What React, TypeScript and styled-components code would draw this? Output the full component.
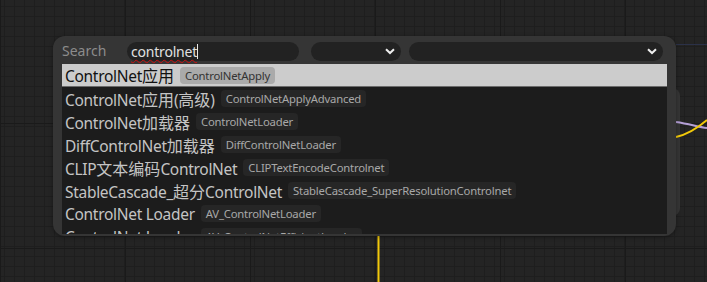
import React from "react";
import styled, { createGlobalStyle } from "styled-components";

const Global = createGlobalStyle`
  html, body { margin: 0; padding: 0; background: #222; }
  body { font-family: "Noto Sans", "Noto Sans CJK SC", sans-serif; }
`;

const Canvas = styled.div`
  position: relative;
  width: 707px;
  height: 282px;
  overflow: hidden;
  background-color: #242424;
  background-image:
    linear-gradient(to right, #1a1a1a 1px, transparent 1px),
    linear-gradient(to bottom, #1a1a1a 1px, transparent 1px),
    linear-gradient(to right, #1e1e1e 1px, transparent 1px),
    linear-gradient(to bottom, #1e1e1e 1px, transparent 1px);
  background-size: 125px 125px, 125px 125px, 10px 10px, 10px 10px;
  background-position: 0 0, 0 -2px, 4px 0, 0 6px;
`;

const Wires = styled.svg`
  position: absolute;
  left: 0;
  top: 0;
  width: 707px;
  height: 282px;
`;

const BackNode = styled.div`
  position: absolute;
  left: 560px;
  top: 88px;
  width: 120px;
  height: 128px;
  background: #353535;
  border-radius: 8px;
`;

const Panel = styled.div`
  position: absolute;
  left: 53px;
  top: 36px;
  width: 623px;
  height: 200px;
  box-sizing: border-box;
  padding: 5px 9px 2px 9px;
  background: #353535;
  border-radius: 12px;
  display: flex;
  flex-direction: column;
  gap: 3px;
  box-shadow: 0 1px 4px rgba(0, 0, 0, 0.35);
`;

const Header = styled.div`
  display: flex;
  align-items: center;
  height: 20px;
`;

const Label = styled.div`
  width: 65px;
  font-size: 14px;
  color: #8c8c8c;
  line-height: 20px;
`;

const SearchBox = styled.div`
  width: 172px;
  height: 19px;
  box-sizing: border-box;
  padding: 0 4px;
  background: #222;
  border-radius: 10px;
  display: flex;
  align-items: center;
  font-size: 14px;
  color: #e0e0e0;
`;

const Typed = styled.span`
  text-decoration: underline wavy #d01010;
  text-decoration-thickness: 1px;
  text-underline-offset: 2px;
  letter-spacing: -0.2px;
`;

const Caret = styled.span`
  display: inline-block;
  width: 1px;
  height: 15px;
  background: #e8e8e8;
`;

const Select = styled.div<{ $w: number; $ml: number }>`
  width: ${(p) => p.$w}px;
  margin-left: ${(p) => p.$ml}px;
  height: 19px;
  box-sizing: border-box;
  padding-right: 6px;
  background: #222;
  border-radius: 10px;
  display: flex;
  align-items: center;
  justify-content: flex-end;
`;

const List = styled.div`
  flex: 1;
  background: #1c1c1c;
  overflow: hidden;
  display: flex;
  flex-direction: column;
`;

const Row = styled.div<{ $sel?: boolean }>`
  flex: none;
  height: 23px;
  box-sizing: border-box;
  padding-left: 3px;
  display: flex;
  align-items: center;
  gap: 6px;
  background: ${(p) => (p.$sel ? "#cccccc" : "transparent")};
  border-bottom: ${(p) => (p.$sel ? "1px solid #6a6a6a" : "none")};
  color: ${(p) => (p.$sel ? "#111" : "#c4c4c4")};
  white-space: nowrap;
`;

const Title = styled.span`
  font-size: 15.5px;
  letter-spacing: -0.3px;
`;

const Cjk = styled.span`
  font-size: 16px;
  letter-spacing: 0;
`;

const Badge = styled.span<{ $sel?: boolean }>`
  font-size: 11.3px;
  line-height: 17px;
  padding: 0 5px;
  border-radius: 4px;
  letter-spacing: -0.2px;
  background: ${(p) => (p.$sel ? "#aaaaaa" : "#262626")};
  color: ${(p) => (p.$sel ? "#333" : "#a8a8a8")};
`;

const Chevron = () => (
  <svg width="10" height="7" viewBox="0 0 10 7">
    <path d="M1 1.2 L5 5 L9 1.2" fill="none" stroke="#eee" strokeWidth="2" />
  </svg>
);

const splitRuns = (s: string) => s.split(/([\u3000-\u9fff\uff00-\uffef]+)/).filter(Boolean);

const isCjk = (s: string) => /[\u3000-\u9fff\uff00-\uffef]/.test(s);

const items: [string, string][] = [
  ["ControlNet应用", "ControlNetApply"],
  ["ControlNet应用(高级)", "ControlNetApplyAdvanced"],
  ["ControlNet加载器", "ControlNetLoader"],
  ["DiffControlNet加载器", "DiffControlNetLoader"],
  ["CLIP文本编码ControlNet", "CLIPTextEncodeControlnet"],
  ["StableCascade_超分ControlNet", "StableCascade_SuperResolutionControlnet"],
  ["ControlNet Loader", "AV_ControlNetLoader"],
  ["ControlNet Loader", "AV_ControlNetEfficientLoader"],
];

export default function App() {
  return (
    <Canvas>
      <Global />
      <BackNode />
      <Wires viewBox="0 0 707 282">
        <line x1="676" y1="44.5" x2="707" y2="44.5" stroke="#2b3148" strokeWidth="1" />
        <path d="M676 122 C 690 124, 698 127, 707 128" fill="none" stroke="#b49fd6" strokeWidth="2" />
        <path d="M676 137 C 690 134, 700 126, 707 120" fill="none" stroke="#f2c90a" strokeWidth="2" />
        <line x1="378.5" y1="230" x2="378.5" y2="282" stroke="#f2c90a" strokeWidth="2" />
      </Wires>
      <Panel>
        <Header>
          <Label>Search</Label>
          <SearchBox>
            <Typed>controlnet</Typed>
            <Caret />
          </SearchBox>
          <Select $w={90} $ml={12}>
            <Chevron />
          </Select>
          <Select $w={254} $ml={8}>
            <Chevron />
          </Select>
        </Header>
        <List>
          {items.map(([t, b], i) => (
            <Row key={i} $sel={i === 0}>
              <Title>
                {splitRuns(t).map((r, j) => (isCjk(r) ? <Cjk key={j}>{r}</Cjk> : <React.Fragment key={j}>{r}</React.Fragment>))}
              </Title>
              <Badge $sel={i === 0}>{b}</Badge>
            </Row>
          ))}
        </List>
      </Panel>
    </Canvas>
  );
}
